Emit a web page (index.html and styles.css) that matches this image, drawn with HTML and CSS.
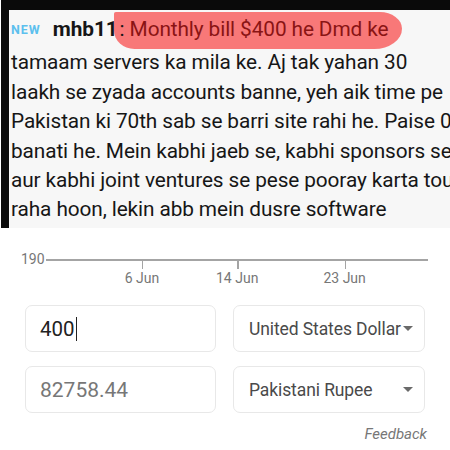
FILE: index.html
```html
<!DOCTYPE html>
<html lang="en">
<head>
  <meta charset="UTF-8">
  <meta name="viewport" content="width=device-width, initial-scale=1.0">
  <title>Currency converter</title>
  <link rel="stylesheet" href="styles.css">
</head>
<body>
  <div class="shot">
    <div class="shot-text">
      <div class="line first">
        <span class="new">NEW</span>
        <span class="user">mhb11</span><span class="mark"><span class="colon">:</span> Monthly bill $400 he Dmd ke</span>
      </div>
      <div class="line">tamaam servers ka mila ke. Aj tak yahan 30</div>
      <div class="line">laakh se zyada accounts banne, yeh aik time pe</div>
      <div class="line">Pakistan ki 70th sab se barri site rahi he. Paise 0</div>
      <div class="line">banati he. Mein kabhi jaeb se, kabhi sponsors se</div>
      <div class="line">aur kabhi joint ventures se pese pooray karta tou</div>
      <div class="line">raha hoon, lekin abb mein dusre software</div>
    </div>
  </div>

  <div class="chart">
    <div class="axis">
      <span class="y-label">190</span>
      <div class="axis-line">
        <div class="tick" style="left: 25.2%;"><span>6 Jun</span></div>
        <div class="tick" style="left: 50.1%;"><span>14 Jun</span></div>
        <div class="tick" style="left: 78.2%;"><span>23 Jun</span></div>
      </div>
    </div>
  </div>

  <div class="converter">
    <div class="field amount">400<span class="caret"></span></div>
    <div class="field select">United States Dollar<span class="arrow"></span></div>
    <div class="field amount result">82758.44</div>
    <div class="field select">Pakistani Rupee<span class="arrow"></span></div>
  </div>
  <div class="feedback">Feedback</div>
</body>
</html>
```

FILE: styles.css
```css
body {
  margin: 0;
  background-color: #ffffff;
  font-family: Roboto, "Noto Sans", Arial, sans-serif;
  width: 450px;
  height: 450px;
  overflow: hidden;
}

/* 上面的截图 */
.shot {
  height: 218px;
  margin-left: 1px;
  width: 443px;
  border-left: 8px solid #0a0a0a;
  border-top: 10px solid #0a0a0a;
  background-color: #f7f7f7;
  overflow: hidden;
}
.shot-text {
  padding-left: 2px;
  width: 460px;
}
.line {
  height: 29.4px;
  line-height: 29.4px;
  font-size: 20.8px;
  color: #161616;
  white-space: nowrap;
  letter-spacing: -0.1px;
}
.line.first {
  margin-top: 5px;
  margin-bottom: 4px;
}
.new {
  color: #5cc0ee;
  font-size: 12.5px;
  font-weight: bold;
  letter-spacing: 1px;
  margin-right: 7px;
  vertical-align: 2px;
}
.user {
  font-weight: bold;
}
.colon {
  color: #161616;
}
.mark {
  color: #8a1414;
  background-color: rgba(248, 92, 92, 0.82);
  padding: 5px 14px 8px 6px;
  margin-left: -4px;
  border-radius: 2px 24px 30px 22px / 2px 18px 22px 20px;
}

/* 图表的坐标轴 */
.chart {
  padding: 23px 22px 0 21px;
  height: 54px;
}
.axis {
  display: flex;
  align-items: flex-start;
}
.y-label {
  font-size: 14px;
  color: #777777;
  line-height: 16px;
  margin-right: 1px;
}
.axis-line {
  position: relative;
  flex: 1;
  margin-top: 8px;
  height: 0;
  border-top: 2px solid #a4a4a4;
}
.tick {
  position: absolute;
  top: 0;
  width: 1.5px;
  height: 8px;
  background-color: #a4a4a4;
}
.tick span {
  position: absolute;
  top: 9px;
  left: 0;
  transform: translateX(-50%);
  font-size: 14px;
  color: #777777;
  white-space: nowrap;
}

/* 换算框 */
.converter {
  display: grid;
  grid-template-columns: 191px 192px;
  column-gap: 17px;
  row-gap: 14px;
  padding: 0 25px;
}
.field {
  position: relative;
  height: 45px;
  border: 1px solid #e8e8e8;
  border-radius: 7px;
  display: flex;
  align-items: center;
  box-sizing: content-box;
}
.amount {
  padding-left: 14px;
  font-size: 20.5px;
  color: #222222;
}
.result {
  color: #777777;
  font-size: 21px;
}
.caret {
  display: inline-block;
  width: 1.5px;
  height: 24px;
  background-color: #222222;
  margin-left: 1px;
}
.select {
  padding-left: 15px;
  font-size: 17.5px;
  color: #4a4a4a;
  letter-spacing: -0.1px;
}
.arrow {
  position: absolute;
  right: 11px;
  top: 20px;
  width: 0;
  height: 0;
  border-left: 5.5px solid transparent;
  border-right: 5.5px solid transparent;
  border-top: 5.5px solid #6a6a6a;
}
.feedback {
  text-align: right;
  padding-right: 23px;
  margin-top: 12px;
  font-size: 15px;
  font-style: italic;
  color: #777777;
}
```
